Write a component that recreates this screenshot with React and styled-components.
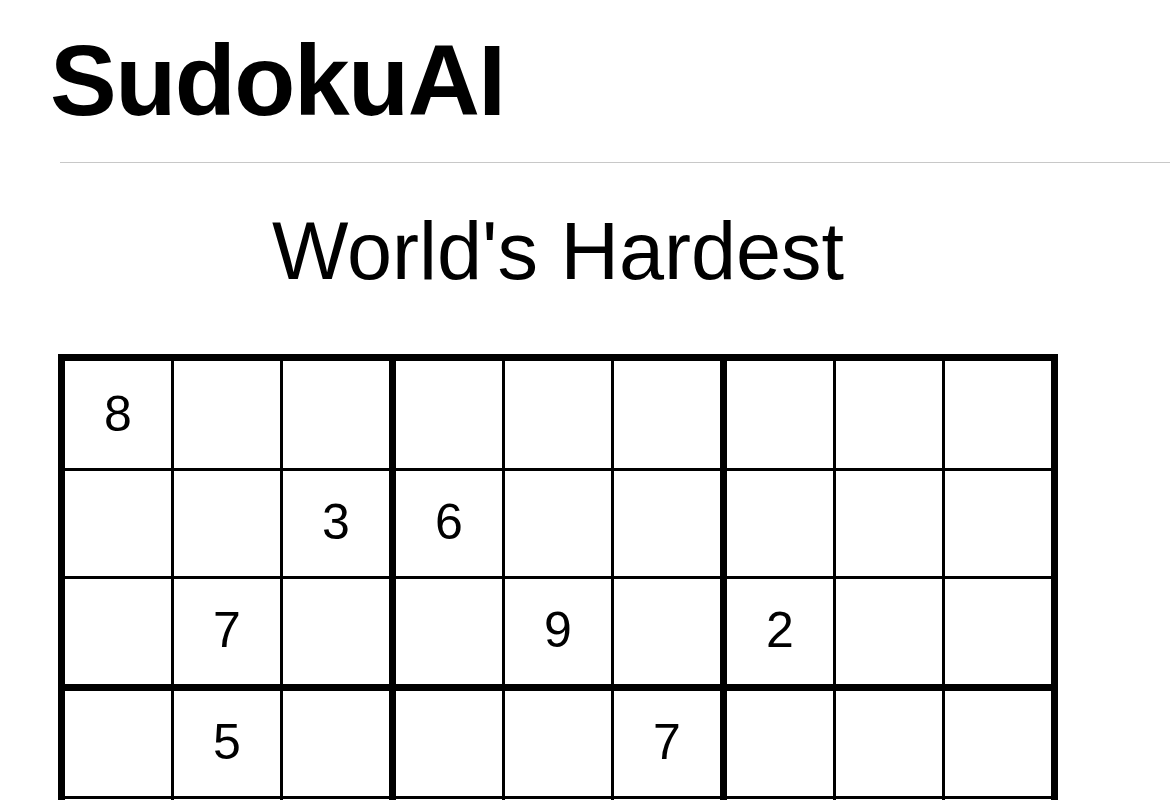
import React from "react";
import styled, { createGlobalStyle } from "styled-components";

const GlobalStyle = createGlobalStyle`
  html, body {
    margin: 0;
    padding: 0;
    background: #ffffff;
    overflow-x: hidden;
  }
  body {
    font-family: "Liberation Sans", Arial, Helvetica, sans-serif;
    color: #000;
  }
`;

const Page = styled.div`
  display: flex;
  flex-direction: column;
`;

const Header = styled.header`
  display: flex;
  flex-direction: column;
  padding-top: 30px;
`;

const Brand = styled.h1`
  margin: 0 0 0 50px;
  font-size: 100px;
  line-height: 1;
  font-weight: 700;
  letter-spacing: -1.5px;
`;

const Divider = styled.hr`
  margin: 32px 0 0 60px;
  border: 0;
  height: 1px;
  background: #c8c8c8;
`;

const Main = styled.main`
  display: flex;
  flex-direction: column;
  align-items: center;
  width: 1000px;
  margin-left: 58px;
`;

const PuzzleTitle = styled.h2`
  margin: 48px 0 0;
  font-size: 81px;
  line-height: 1;
  font-weight: 400;
`;

const Board = styled.div`
  margin-top: 62px;
  display: grid;
  grid-template-columns: repeat(9, auto);
  border-top: 7px solid #000;
  border-left: 7px solid #000;
`;

const Cell = styled.div`
  box-sizing: content-box;
  width: 106px;
  height: 105px;
  display: flex;
  align-items: center;
  justify-content: center;
  font-size: 50px;
  line-height: 1;
  padding-bottom: 2px;
  margin-bottom: -2px;
  border-right: ${(p) => (p.$thickRight ? 7 : 3)}px solid #000;
  border-bottom: ${(p) => (p.$thickBottom ? 7 : 3)}px solid #000;
`;

const puzzle = [
  "8........",
  "..36.....",
  ".7..9.2..",
  ".5...7...",
  "....457..",
  "...1...3.",
  "..1....68",
  "..85...1.",
  ".9....4..",
];

export default function App() {
  return (
    <Page>
      <GlobalStyle />
      <Header>
        <Brand>SudokuAI</Brand>
        <Divider />
      </Header>
      <Main>
        <PuzzleTitle>World's Hardest</PuzzleTitle>
        <Board>
          {puzzle.map((row, r) =>
            row.split("").map((ch, c) => (
              <Cell
                key={`${r}-${c}`}
                $thickRight={c % 3 === 2}
                $thickBottom={r % 3 === 2}
              >
                {ch === "." ? "" : ch}
              </Cell>
            ))
          )}
        </Board>
      </Main>
    </Page>
  );
}
